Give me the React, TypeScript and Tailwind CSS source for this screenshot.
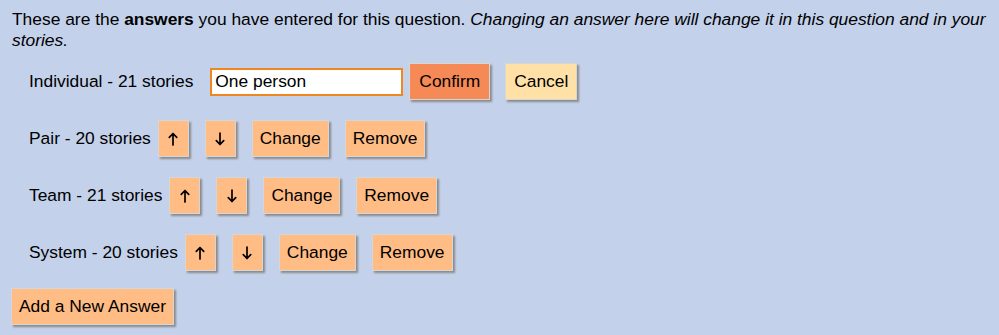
import React from "react";

const btn =
  "h-[37px] border border-[#d6d6d6] shadow-[2px_2px_2px_#8a8a8a] text-black leading-none";

function Arrow({ down }: { down?: boolean }) {
  return (
    <svg
      width="10"
      height="14"
      viewBox="0 0 10 14"
      className={`mx-auto ${down ? "rotate-180" : ""}`}
      fill="none"
      stroke="black"
      strokeWidth="1.7"
      strokeLinecap="round"
      strokeLinejoin="round"
    >
      <path d="M5 1.5V13M1.3 5.3L5 1.5L8.7 5.3" />
    </svg>
  );
}

function Row({ label }: { label: string }) {
  return (
    <div className="flex items-center pl-[17px] mt-[20px]">
      <span className="mr-[7px]">{label}</span>
      <button className={`${btn} w-[31px] bg-[#ffbc85]`}>
        <Arrow />
      </button>
      <button className={`${btn} w-[31px] ml-[16px] bg-[#ffbc85]`}>
        <Arrow down />
      </button>
      <button className={`${btn} px-[7px] ml-[16px] bg-[#ffbc85]`}>Change</button>
      <button className={`${btn} px-[7px] ml-[16px] bg-[#ffbc85]`}>Remove</button>
    </div>
  );
}

export default function App() {
  return (
    <div
      className="w-[999px] h-[335px] bg-[#c3d1eb] text-black text-[17.4px] pl-[12px] pr-[6px] pt-[9px]"
      style={{ fontFamily: '"Liberation Sans", Arial, sans-serif' }}
    >
      <p className="leading-[21px]">
        These are the <b>answers</b> you have entered for this question.{" "}
        <i>Changing an answer here will change it in this question and in your stories.</i>
      </p>
      <div className="flex items-center pl-[17px] mt-[12px]">
        <span className="mr-[17px]">Individual - 21 stories</span>
        <input
          defaultValue="One person"
          className="w-[193px] h-[28px] border-2 border-[#f0861f] bg-white px-[3px] outline-none"
        />
        <button className={`${btn} ml-[6px] px-[9px] bg-[#f68a56]`}>Confirm</button>
        <button className={`${btn} ml-[15px] px-[8px] bg-[#ffe1a8]`}>Cancel</button>
      </div>
      <Row label="Pair - 20 stories" />
      <Row label="Team - 21 stories" />
      <Row label="System - 20 stories" />
      <div className="mt-[17px] -ml-[1px]">
        <button className={`${btn} px-[7px] bg-[#ffbc85]`}>Add a New Answer</button>
      </div>
    </div>
  );
}
